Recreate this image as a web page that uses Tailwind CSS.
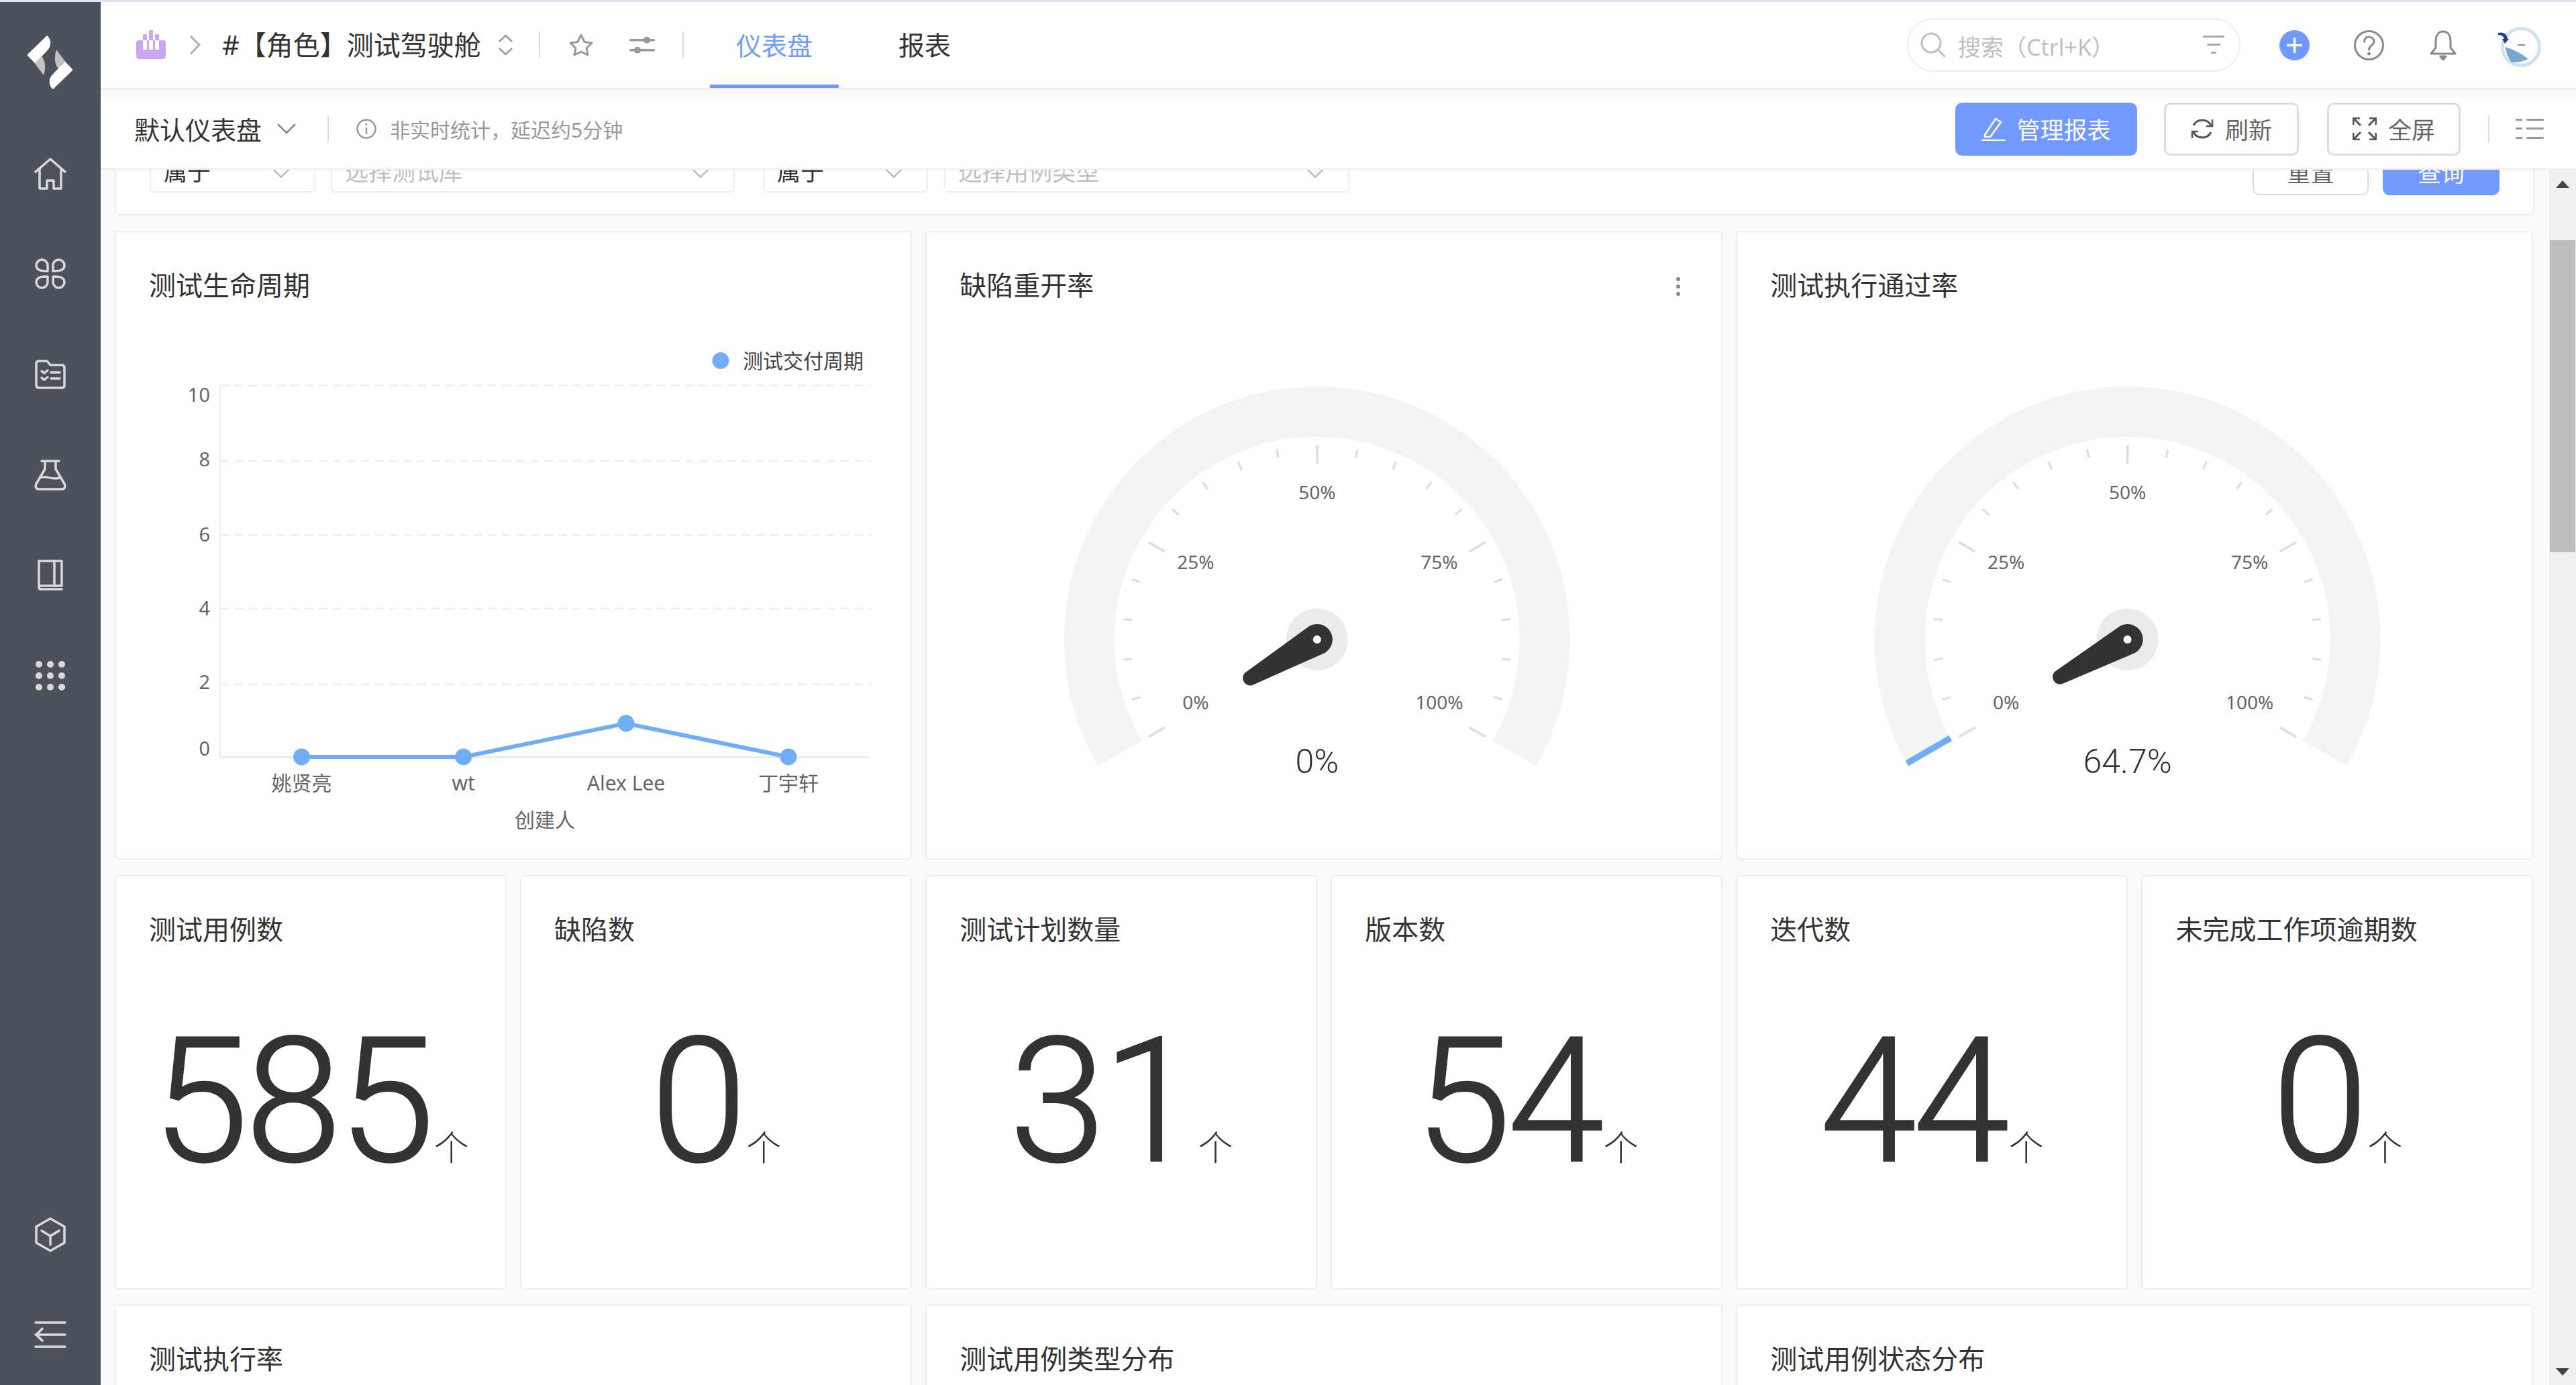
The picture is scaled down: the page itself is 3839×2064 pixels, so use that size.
<!DOCTYPE html>
<html lang="zh-CN">
<head>
  <meta charset="UTF-8" />
  <title>测试驾驶舱</title>
  <script src="https://cdn.jsdelivr.net/npm/@tailwindcss/browser@4"></script>
</head>
<body class="w-[3839px] h-[2064px] overflow-hidden bg-[#fafafa] text-[#333] font-['Noto_Sans','Noto_Sans_CJK_SC',sans-serif]">
  <div class="h-[3px] bg-[#dfe3ef]"></div>
  <div class="flex h-[2061px]">

    <!-- sidebar -->
    <aside class="w-[150px] shrink-0 bg-[#4b525c] flex flex-col justify-between text-[#d9d9d9]">
      <div>
        <div class="h-[181px] pt-[50px] pl-[40px]">
          <svg width="70" height="80" viewBox="0 0 70 80">
            <g>
              <path d="M22 31C27 36 29 46 25 59L10 39Z" fill="#c2c2c2"/>
              <path d="M30 0C34 3 36 8 35 14C34 19 31 22 22 31C17 36 14 38 12 41L2 31Q0 29 2 27Z" fill="#fff"/>
            </g>
            <g transform="rotate(180 34.5 40)">
              <path d="M22 31C27 36 29 46 25 59L10 39Z" fill="#c2c2c2"/>
              <path d="M30 0C34 3 36 8 35 14C34 19 31 22 22 31C17 36 14 38 12 41L2 31Q0 29 2 27Z" fill="#fff"/>
            </g>
          </svg>
        </div>
        <div class="h-[149.6px] flex items-center justify-center">
          <svg width="48" height="48" viewBox="0 0 48 48" fill="none" stroke="currentColor" stroke-width="3.5" stroke-linejoin="round"><path d="M1 22L24 2L47 22"/><path d="M8 16V46H19V34H29V46H40V16"/></svg>
        </div>
        <div class="h-[149.6px] flex items-center justify-center">
          <svg width="46" height="46" viewBox="0 0 46 46" fill="none" stroke="currentColor" stroke-width="3.5" stroke-linejoin="round"><path d="M19 19C12 19 2 19 2 10.500A8.500 8.500 0 0 1 19 10.500Z"/><path d="M27 19C34 19 44 19 44 10.500A8.500 8.500 0 0 0 27 10.500Z"/><path d="M19 27C12 27 2 27 2 35.500A8.500 8.500 0 0 0 19 35.500Z"/><path d="M27 27C34 27 44 27 44 35.500A8.500 8.500 0 0 1 27 35.500Z"/></svg>
        </div>
        <div class="h-[149.6px] flex items-center justify-center">
          <svg width="46" height="44" viewBox="0 0 46 44" fill="none" stroke="currentColor" stroke-width="3.5" stroke-linejoin="round" stroke-linecap="round"><path d="M2 6Q2 2 6 2H18L23 8H40Q44 8 44 12V38Q44 42 40 42H6Q2 42 2 38Z"/><path d="M10 17L14 20L19 16M10 27L14 30L19 26M24 19H37M24 28H37"/></svg>
        </div>
        <div class="h-[149.6px] flex items-center justify-center">
          <svg width="48" height="46" viewBox="0 0 48 46" fill="none" stroke="currentColor" stroke-width="3.5" stroke-linejoin="round" stroke-linecap="round"><path d="M11 2H37M16 2V14L3 36Q0 44 8 44H40Q48 44 45 36L32 14V2"/><path d="M9 27C18 22 24 31 38 27"/></svg>
        </div>
        <div class="h-[149.6px] flex items-center justify-center">
          <svg width="38" height="46" viewBox="0 0 38 46" fill="none" stroke="currentColor" stroke-width="3.5" stroke-linejoin="round" stroke-linecap="round"><path d="M2 39V2H36V39H4Q2 39 2 41.500Q2 44 4 44H36"/><path d="M25 2V39"/></svg>
        </div>
        <div class="h-[149.6px] flex items-center justify-center">
          <svg width="46" height="46" viewBox="0 0 46 46" fill="currentColor"><circle cx="6" cy="6" r="5"/><circle cx="23" cy="6" r="5"/><circle cx="40" cy="6" r="5"/><circle cx="6" cy="23" r="5"/><circle cx="23" cy="23" r="5"/><circle cx="40" cy="23" r="5"/><circle cx="6" cy="40" r="5"/><circle cx="23" cy="40" r="5"/><circle cx="40" cy="40" r="5"/></svg>
        </div>
      </div>
      <div>
        <div class="h-[149.6px] flex items-center justify-center">
          <svg width="46" height="52" viewBox="0 0 46 52" fill="none" stroke="currentColor" stroke-width="3.5" stroke-linejoin="round" stroke-linecap="round"><path d="M23 2L44 14V38L23 50L2 38V14Z"/><path d="M10 20L23 28L36 20M23 28V41"/></svg>
        </div>
        <div class="h-[149.6px] flex items-center justify-center">
          <svg width="48" height="40" viewBox="0 0 48 40" fill="none" stroke="currentColor" stroke-width="3.5" stroke-linecap="round" stroke-linejoin="round"><path d="M2 2H46M2 20H46M2 38H46M12 11L3 20L12 29"/></svg>
        </div>
      </div>
    </aside>

    <div class="w-[3689px] flex flex-col">
      <!-- top bar -->
      <header class="h-[130px] shrink-0 bg-white border-b-2 border-[#eee] flex items-center relative z-10">
        <svg class="ml-[53px]" width="44" height="44" viewBox="0 0 44 44" fill="#c9a7f3"><path d="M10 6H16V15H19V0H25V15H28V6H34V15H40Q44 15 44 19V38Q44 43 39 43H5Q0 43 0 38V19Q0 15 4 15H10Z"/><path d="M10 15H16V29H10ZM19 15H25V29H19ZM28 15H34V29H28Z" fill="#fff"/></svg>
        <svg class="ml-[36px]" width="16" height="28" viewBox="0 0 16 28" fill="none" stroke="#a3b2b2" stroke-width="3"><path d="M1 1L14 14L1 27"/></svg>
        <span class="ml-[32px] w-[410px] text-[40px] whitespace-nowrap">#【角色】测试驾驶舱</span>
        <svg width="25" height="32" viewBox="0 0 25 32" fill="none" stroke="#999" stroke-width="2.500"><path d="M3 11L12.500 2L22 11M3 21L12.500 30L22 21"/></svg>
        <div class="ml-[37px] w-[2px] h-[40px] bg-[#ddd]"></div>
        <svg class="ml-[43px]" width="36" height="34" viewBox="0 0 36 34" fill="none" stroke="#999" stroke-width="3" stroke-linejoin="round"><path d="M18 2L23 12.500L34 14L26 22L28 32L18 27L8 32L10 22L2 14L13 12.500Z"/></svg>
        <svg class="ml-[54px]" width="38" height="28" viewBox="0 0 38 28" fill="#999"><rect x="0" y="5" width="38" height="3.500" rx="1.700"/><circle cx="26" cy="6.700" r="5"/><rect x="0" y="20" width="38" height="3.500" rx="1.700"/><circle cx="12" cy="21.700" r="5"/></svg>
        <div class="ml-[41px] w-[2px] h-[40px] bg-[#ddd]"></div>
        <div class="ml-[39px] relative w-[192px] h-[128px] flex items-center justify-center text-[38px] text-[#6f9bff]">
          仪表盘
          <div class="absolute left-0 right-0 bottom-0 h-[5px] bg-[#7299ff]"></div>
        </div>
        <span class="ml-[89px] text-[39px]">报表</span>

        <div class="ml-auto w-[497px] h-[80px] rounded-full border-2 border-[#eee] flex items-center pl-[18px] pr-[22px] text-[34px] text-[#c0c0c0] whitespace-nowrap">
          <svg width="38" height="38" viewBox="0 0 38 38" fill="none" stroke="#c0c0c0" stroke-width="3" stroke-linecap="round"><circle cx="16" cy="16" r="14"/><path d="M27 27L36 36"/></svg>
          <span class="ml-[18px] pt-[6px]">搜索（Ctrl+K）</span>
          <svg class="ml-auto" width="32" height="28" viewBox="0 0 32 28" fill="#aaa"><rect x="0" y="0" width="32" height="3" rx="1"/><rect x="6" y="12" width="20" height="3" rx="1"/><rect x="12" y="24" width="8" height="3" rx="1"/></svg>
        </div>
        <svg class="ml-[58px]" width="45" height="45" viewBox="0 0 45 45"><circle cx="22.500" cy="22.500" r="22.500" fill="#6f99ff"/><path d="M22.500 11V34M11 22.500H34" stroke="#fff" stroke-width="3.500"/></svg>
        <svg class="ml-[66px]" width="45" height="45" viewBox="0 0 45 45" fill="none" stroke="#8a8a8a" stroke-width="3" stroke-linecap="round"><circle cx="22.500" cy="22.500" r="21"/><path d="M15.500 17C15.500 7 30 8 30 17C30 23 22.500 22 22.500 29"/><circle cx="22.500" cy="35" r="1" fill="#8a8a8a"/></svg>
        <svg class="ml-[68px]" width="40" height="46" viewBox="0 0 40 46" fill="none" stroke="#8a8a8a" stroke-width="3" stroke-linejoin="round"><path d="M20 3C28 3 31 10 31 18V27L38 36H2L9 27V18C9 10 12 3 20 3Z"/><path d="M16 40H24L20 45Z" fill="#8a8a8a"/></svg>
        <svg class="ml-[58px] overflow-visible" width="68" height="62" viewBox="0 0 68 62">
          <circle cx="38" cy="34" r="27.500" fill="#fff" stroke="#cfe3ee" stroke-width="5"/>
          <path d="M14 34L24 37L38 44L49 52L38 56L24 57L18 47Z" fill="#7aa6cc"/>
          <rect x="33" y="30" width="11" height="2" fill="#888"/>
          <path d="M4 13C12 11 17 15 18 22L20 22L14 29L10 22L13 22C12 18 9 16 4 16Z" fill="#25388c"/>
        </svg>
        <div class="w-[52px]"></div>
      </header>

      <!-- toolbar -->
      <div class="h-[120px] shrink-0 border-b-2 border-[#eee] bg-linear-to-b from-[#f8f8f8] to-white to-[16%] flex items-center relative z-10 text-[#666]">
        <span class="ml-[50px] pt-[3px] text-[38px] text-[#333]">默认仪表盘</span>
        <svg class="ml-[23px]" width="28" height="16" viewBox="0 0 28 16" fill="none" stroke="#888" stroke-width="2.500"><path d="M1 1L14 14L27 1"/></svg>
        <div class="ml-[47px] w-[2px] h-[40px] bg-[#ddd]"></div>
        <svg class="ml-[41px]" width="30" height="30" viewBox="0 0 30 30" fill="none" stroke="#999" stroke-width="2.500"><circle cx="15" cy="15" r="13.500"/><path d="M15 13V23M15 7V10"/></svg>
        <span class="ml-[20px] pt-[3px] text-[30px] text-[#999]">非实时统计，延迟约5分钟</span>

        <button class="ml-auto w-[271px] h-[79px] rounded-[10px] bg-[#7299ff] text-white text-[35px] flex items-center justify-center">
          <svg width="36" height="36" viewBox="0 0 36 36" fill="none" stroke="#fff" stroke-width="2.500" stroke-linejoin="round"><path d="M5 27L21 3L29 8L13 30H5Z"/><path d="M0 35H36"/></svg>
          <span class="ml-[16px] pt-[5px]">管理报表</span>
        </button>
        <button class="ml-[40px] w-[201px] h-[79px] rounded-[10px] border-[3px] border-[#ddd] bg-white text-[35px] flex items-center justify-center">
          <svg width="34" height="34" viewBox="0 0 34 34" fill="none" stroke="#555" stroke-width="3"><path d="M30 12A14.500 14.500 0 0 0 4 12M4 22A14.500 14.500 0 0 0 30 22"/><path d="M32 3V13H23M2 31V21H11" stroke-width="2.500"/></svg>
          <span class="ml-[17px] pt-[5px]">刷新</span>
        </button>
        <button class="ml-[42px] w-[199px] h-[79px] rounded-[10px] border-[3px] border-[#ddd] bg-white text-[35px] flex items-center justify-center">
          <svg width="36" height="34" viewBox="0 0 36 34" fill="none" stroke="#555" stroke-width="3"><path d="M1 11V1H11M1 1L12 12M35 11V1H25M35 1L24 12M1 23V33H11M1 33L12 22M35 23V33H25M35 33L24 22"/></svg>
          <span class="ml-[17px] pt-[5px]">全屏</span>
        </button>
        <div class="ml-[41px] w-[2px] h-[40px] bg-[#ddd]"></div>
        <svg class="ml-[39px]" width="42" height="30" viewBox="0 0 42 30" fill="#999"><rect x="0" y="0" width="10" height="3" rx="1"/><rect x="16" y="0" width="26" height="3" rx="1"/><rect x="0" y="13" width="10" height="3" rx="1"/><rect x="16" y="13" width="26" height="3" rx="1"/><rect x="0" y="27" width="10" height="3" rx="1"/><rect x="16" y="27" width="26" height="3" rx="1"/></svg>
        <div class="w-[48px]"></div>
      </div>

      <!-- page content + scrollbar -->
      <div class="flex flex-1 min-h-0">
        <main class="flex-1 overflow-hidden pl-[21px]">
          <div class="-mt-[40px] w-[3606px] h-[108px] bg-white rounded-[6px] border-2 border-[#eee] flex pt-[6px] pl-[50px] pr-[50px]">
            <div class="w-[247px] h-[66px] rounded-[6px] border-2 border-[#eee] flex items-center pl-[19px] pr-[36px] text-[35px]"><span class="pt-[4px]">属于</span><svg class="ml-auto mt-[8px]" width="26" height="14" viewBox="0 0 26 14" fill="none" stroke="#bbb" stroke-width="2.500"><path d="M1 1L13 13L25 1"/></svg></div>
            <div class="ml-[23px] w-[602px] h-[66px] rounded-[6px] border-2 border-[#eee] flex items-center pl-[19px] pr-[36px] text-[35px] text-[#c0c0c0]"><span class="pt-[4px]">选择测试库</span><svg class="ml-auto mt-[8px]" width="26" height="14" viewBox="0 0 26 14" fill="none" stroke="#bbb" stroke-width="2.500"><path d="M1 1L13 13L25 1"/></svg></div>
            <div class="ml-[42px] w-[246px] h-[66px] rounded-[6px] border-2 border-[#eee] flex items-center pl-[19px] pr-[36px] text-[35px]"><span class="pt-[4px]">属于</span><svg class="ml-auto mt-[8px]" width="26" height="14" viewBox="0 0 26 14" fill="none" stroke="#bbb" stroke-width="2.500"><path d="M1 1L13 13L25 1"/></svg></div>
            <div class="ml-[24px] w-[604px] h-[66px] rounded-[6px] border-2 border-[#eee] flex items-center pl-[19px] pr-[36px] text-[35px] text-[#c0c0c0]"><span class="pt-[4px]">选择用例类型</span><svg class="ml-auto mt-[8px]" width="26" height="14" viewBox="0 0 26 14" fill="none" stroke="#bbb" stroke-width="2.500"><path d="M1 1L13 13L25 1"/></svg></div>
            <div class="ml-auto w-[173px] h-[70px] rounded-[10px] border-2 border-[#ddd] flex items-center justify-center text-[35px] text-[#666]"><span class="pt-[4px]">重置</span></div>
            <div class="ml-[21px] w-[174px] h-[70px] rounded-[10px] bg-[#7299ff] flex items-center justify-center text-[35px] text-white"><span class="pt-[4px]">查询</span></div>
          </div>

          <div class="mt-[23px] w-[3604px] grid grid-cols-6 gap-x-[20.5px] gap-y-[22.5px]">
            <section class="col-span-2 h-[937px] bg-white rounded-[6px] border-2 border-[#eee]">
              <h3 class="mt-[50px] ml-[49px] h-[58px] text-[40px] leading-[58px]">测试生命周期</h3>
              <svg class="block" width="1184" height="825" viewBox="0 0 1184 825">
                <g transform="translate(-173,-454)" font-size="29" fill="#666">
                  <g stroke="#eee" stroke-width="2.500" stroke-dasharray="13 8">
                    <path d="M328 574.500H1298M328 687H1298M328 797.500H1298M328 907H1298M328 1020H1298"/>
                  </g>
                  <path d="M328 574V1128" stroke="#eee" stroke-width="2"/>
                  <path d="M328 1128.500H1296" stroke="#e8e8e8" stroke-width="2.500"/>
                  <g text-anchor="end">
                    <text x="313" y="599">10</text><text x="313" y="695">8</text><text x="313" y="807">6</text><text x="313" y="917">4</text><text x="313" y="1027">2</text><text x="313" y="1126">0</text>
                  </g>
                  <polyline points="449.500,1128 690.700,1128 933,1078 1175,1128" fill="none" stroke="#70adf6" stroke-width="6"/>
                  <g fill="#70adf6"><circle cx="449.500" cy="1128" r="12.500"/><circle cx="690.700" cy="1128" r="12.500"/><circle cx="933" cy="1078" r="12.500"/><circle cx="1175" cy="1128" r="12.500"/><circle cx="1074" cy="537.500" r="12.500"/></g>
                  <text x="1107" y="549" font-size="30" fill="#444">测试交付周期</text>
                  <g text-anchor="middle" font-size="30">
                    <text x="449.500" y="1178">姚贤亮</text><text x="690.700" y="1178">wt</text><text x="933" y="1178">Alex Lee</text><text x="1175" y="1178">丁宇轩</text><text x="812" y="1233">创建人</text>
                  </g>
                </g>
              </svg>
            </section>
            <section class="col-span-2 h-[937px] bg-white rounded-[6px] border-2 border-[#eee] relative">
              <h3 class="mt-[50px] ml-[49px] h-[58px] text-[40px] leading-[58px]">缺陷重开率</h3>
              <svg class="absolute right-[60px] top-[65px]" width="8" height="32" viewBox="0 0 8 32" fill="#888"><circle cx="4" cy="5" r="3"/><circle cx="4" cy="16" r="3"/><circle cx="4" cy="27" r="3"/></svg>
              <svg class="gauge block" data-cx="1963" data-off="1381.2" data-val="0%" data-needle="210" width="1184" height="825" viewBox="0 0 1184 825"></svg>
            </section>
            <section class="col-span-2 h-[937px] bg-white rounded-[6px] border-2 border-[#eee]">
              <h3 class="mt-[50px] ml-[49px] h-[58px] text-[40px] leading-[58px]">测试执行通过率</h3>
              <svg class="gauge block" data-cx="3171" data-off="2589.4" data-val="64.7%" data-needle="209" data-fill="1" width="1184" height="825" viewBox="0 0 1184 825"></svg>
            </section>

            <section class="h-[618px] bg-white rounded-[6px] border-2 border-[#eee]">
              <h3 class="mt-[50px] ml-[49px] h-[58px] text-[40px] leading-[58px]">测试用例数</h3>
              <div class="mt-[98px] flex justify-center items-baseline font-['Roboto',sans-serif] font-light text-[259px] leading-[260px] tracking-[-5px] [-webkit-text-stroke:2.5px_#333]">585<span class="ml-[4px] text-[52px] tracking-normal font-['Noto_Sans_CJK_SC',sans-serif] [-webkit-text-stroke:0]">个</span></div>
            </section>
            <section class="h-[618px] bg-white rounded-[6px] border-2 border-[#eee]">
              <h3 class="mt-[50px] ml-[49px] h-[58px] text-[40px] leading-[58px]">缺陷数</h3>
              <div class="mt-[98px] flex justify-center items-baseline font-['Roboto',sans-serif] font-light text-[259px] leading-[260px] tracking-[-5px] [-webkit-text-stroke:2.5px_#333]">0<span class="ml-[4px] text-[52px] tracking-normal font-['Noto_Sans_CJK_SC',sans-serif] [-webkit-text-stroke:0]">个</span></div>
            </section>
            <section class="h-[618px] bg-white rounded-[6px] border-2 border-[#eee]">
              <h3 class="mt-[50px] ml-[49px] h-[58px] text-[40px] leading-[58px]">测试计划数量</h3>
              <div class="mt-[98px] flex justify-center items-baseline font-['Roboto',sans-serif] font-light text-[259px] leading-[260px] tracking-[-5px] [-webkit-text-stroke:2.5px_#333]">31<span class="ml-[4px] text-[52px] tracking-normal font-['Noto_Sans_CJK_SC',sans-serif] [-webkit-text-stroke:0]">个</span></div>
            </section>
            <section class="h-[618px] bg-white rounded-[6px] border-2 border-[#eee]">
              <h3 class="mt-[50px] ml-[49px] h-[58px] text-[40px] leading-[58px]">版本数</h3>
              <div class="mt-[98px] flex justify-center items-baseline font-['Roboto',sans-serif] font-light text-[259px] leading-[260px] tracking-[-5px] [-webkit-text-stroke:2.5px_#333]">54<span class="ml-[4px] text-[52px] tracking-normal font-['Noto_Sans_CJK_SC',sans-serif] [-webkit-text-stroke:0]">个</span></div>
            </section>
            <section class="h-[618px] bg-white rounded-[6px] border-2 border-[#eee]">
              <h3 class="mt-[50px] ml-[49px] h-[58px] text-[40px] leading-[58px]">迭代数</h3>
              <div class="mt-[98px] flex justify-center items-baseline font-['Roboto',sans-serif] font-light text-[259px] leading-[260px] tracking-[-5px] [-webkit-text-stroke:2.5px_#333]">44<span class="ml-[4px] text-[52px] tracking-normal font-['Noto_Sans_CJK_SC',sans-serif] [-webkit-text-stroke:0]">个</span></div>
            </section>
            <section class="h-[618px] bg-white rounded-[6px] border-2 border-[#eee]">
              <h3 class="mt-[50px] ml-[49px] h-[58px] text-[40px] leading-[58px]">未完成工作项逾期数</h3>
              <div class="mt-[98px] flex justify-center items-baseline font-['Roboto',sans-serif] font-light text-[259px] leading-[260px] tracking-[-5px] [-webkit-text-stroke:2.5px_#333]">0<span class="ml-[4px] text-[52px] tracking-normal font-['Noto_Sans_CJK_SC',sans-serif] [-webkit-text-stroke:0]">个</span></div>
            </section>

            <section class="col-span-2 h-[300px] bg-white rounded-[6px] border-2 border-[#eee]">
              <h3 class="mt-[50px] ml-[49px] h-[58px] text-[40px] leading-[58px]">测试执行率</h3>
            </section>
            <section class="col-span-2 h-[300px] bg-white rounded-[6px] border-2 border-[#eee]">
              <h3 class="mt-[50px] ml-[49px] h-[58px] text-[40px] leading-[58px]">测试用例类型分布</h3>
            </section>
            <section class="col-span-2 h-[300px] bg-white rounded-[6px] border-2 border-[#eee]">
              <h3 class="mt-[50px] ml-[49px] h-[58px] text-[40px] leading-[58px]">测试用例状态分布</h3>
            </section>
          </div>
        </main>

        <!-- scrollbar -->
        <div class="w-[41px] shrink-0 bg-[#f0f0f0] flex flex-col items-center relative">
          <svg class="mt-[16px]" width="20" height="11" viewBox="0 0 20 11" fill="#444"><path d="M10 0L20 11H0Z"/></svg>
          <div class="mt-[78px] w-[38px] h-[465px] bg-[#bdbdbd]"></div>
          <svg class="mt-auto mb-[14px]" width="20" height="11" viewBox="0 0 20 11" fill="#444"><path d="M10 11L20 0H0Z"/></svg>
        </div>
      </div>
    </div>
  </div>

  <script>
    // gauges: 240 degree sweep, coordinates are page pixels shifted into the card
    const pt = (cx, cy, r, deg) => {
      const a = deg * Math.PI / 180;
      return [cx + r * Math.cos(a), cy - r * Math.sin(a)];
    };
    document.querySelectorAll('.gauge').forEach(svg => {
      const cx = +svg.dataset.cx, cy = 953;
      let s = `<g transform="translate(${-svg.dataset.off},-454)">`;
      const [x0, y0] = pt(cx, cy, 339.5, 210), [x1, y1] = pt(cx, cy, 339.5, -30);
      s += `<path d="M${x0} ${y0}A339.5 339.5 0 1 1 ${x1} ${y1}" fill="none" stroke="#f4f4f4" stroke-width="75"/>`;
      if (svg.dataset.fill) {
        const a = pt(cx, cy, 377, 210), b = pt(cx, cy, 377, 208.6), c = pt(cx, cy, 302, 208.2), d = pt(cx, cy, 302, 210);
        s += `<path d="M${a}L${b}L${c}L${d}Z" fill="#70adf6"/>`;
      }
      for (let i = 0; i <= 20; i++) {
        const deg = 210 - i * 12, major = i % 5 === 0;
        const [ax, ay] = pt(cx, cy, 290, deg), [bx, by] = pt(cx, cy, major ? 262 : 277, deg);
        s += `<line x1="${ax}" y1="${ay}" x2="${bx}" y2="${by}" stroke="#e0e0e0" stroke-width="${major ? 4 : 3.5}"/>`;
      }
      [['0%', -181, 104], ['25%', -181, -105], ['50%', 0, -209], ['75%', 182, -105], ['100%', 182, 104]].forEach(([t, dx, dy]) => {
        s += `<text x="${cx + dx}" y="${cy + dy}" text-anchor="middle" font-size="28" fill="#666">${t}</text>`;
      });
      s += `<circle cx="${cx}" cy="${cy}" r="46" fill="#ebebeb"/>`;
      // needle drawn pointing left, then rotated to its value
      s += `<g transform="translate(${cx},${cy}) rotate(${180 - svg.dataset.needle})">
        <path d="M0 -23A23 23 0 0 1 0 23L-115 11A11 11 0 0 1 -115 -11Z" fill="#333"/>
        <circle cx="0" cy="0" r="6" fill="#fff"/></g>`;
      s += `<text x="${cx}" y="${cy + 199}" text-anchor="middle" font-size="50" font-weight="300" font-family="Roboto, sans-serif" fill="#333">${svg.dataset.val}</text>`;
      svg.innerHTML = s + '</g>';
    });
  </script>
</body>
</html>
